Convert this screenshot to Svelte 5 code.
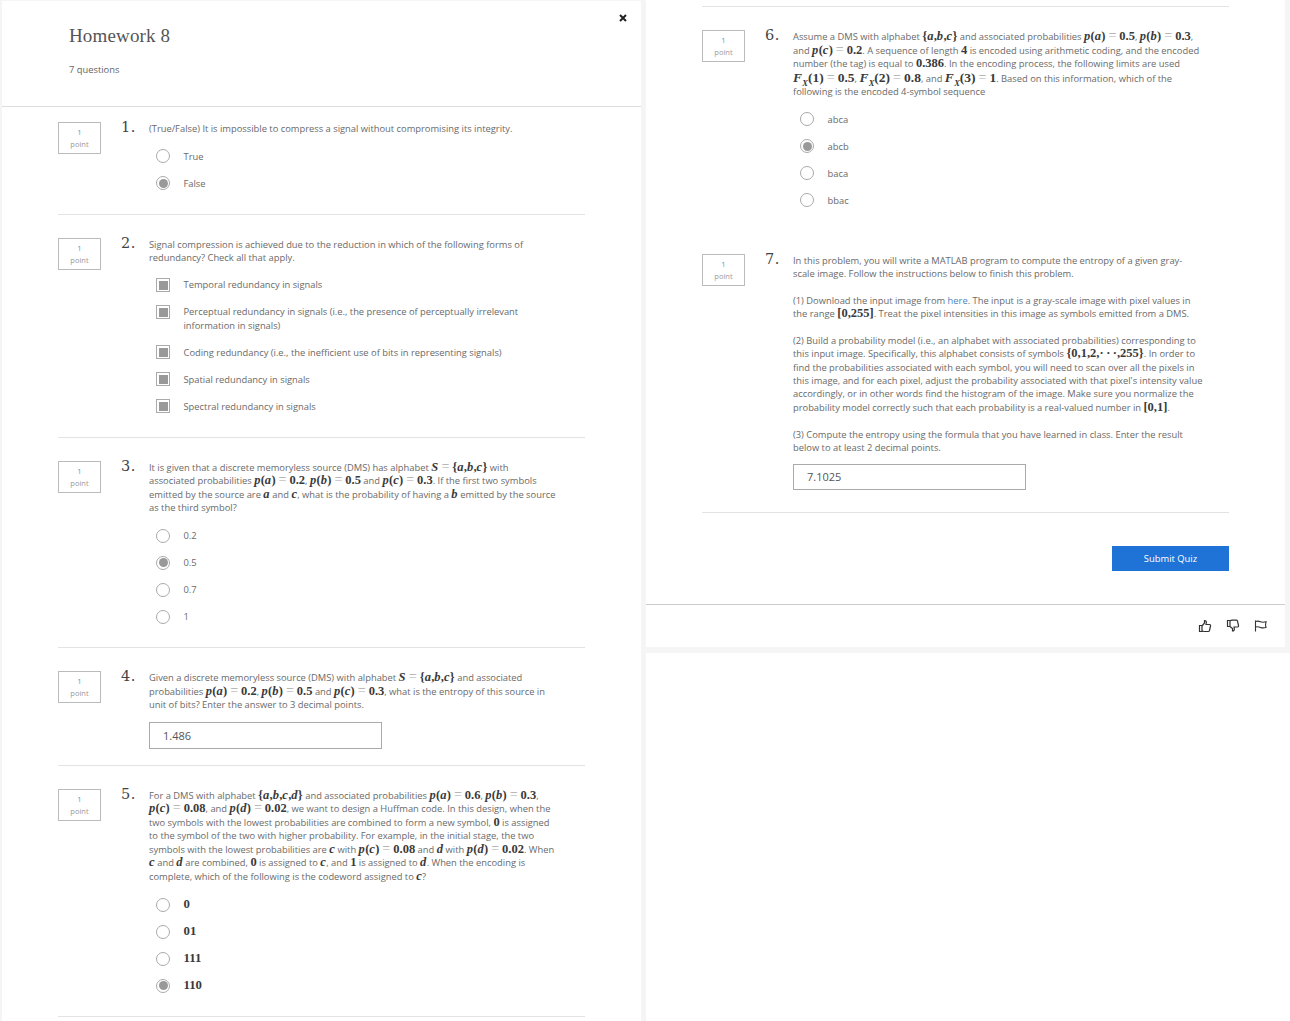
<script>
  const q3 = ['0.2', '0.5', '0.7', '1'];
  const q6 = ['abca', 'abcb', 'baca', 'bbac'];
  const q5 = ['0', '01', '111', '110'];
  const q2 = [
    'Temporal redundancy in signals',
    'Perceptual redundancy in signals (i.e., the presence of perceptually irrelevant<br>information in signals)',
    'Coding redundancy (i.e., the inefficient use of bits in representing signals)',
    'Spatial redundancy in signals',
    'Spectral redundancy in signals'
  ];
</script>

{#snippet eq(v, n)}<span class="m"><i>p</i>(<i>{v}</i>)<b>=</b>{n}</span>{/snippet}
{#snippet F(k, n)}<span class="m big"><i>F</i><sub>X</sub>({k})<b>=</b>{n}</span>{/snippet}
{#snippet v(s)}<span class="m"><i>{s}</i></span>{/snippet}
{#snippet n(s)}<span class="m">{s}</span>{/snippet}

{#snippet question(num, prompt, answers)}
  <div class="question">
    <div class="points"><span class="one">1</span><span>point</span></div>
    <div class="num">{num}.</div>
    <div class="body">
      <div class="prompt">{@render prompt()}</div>
      {@render answers()}
    </div>
  </div>
{/snippet}

{#snippet radios(items, selected, math)}
  <div class="options">
    {#each items as item, i}
      <div class="option">
        <span class="radio" class:on={i === selected}></span>
        <span class="label" class:mathlabel={math}>{item}</span>
      </div>
    {/each}
  </div>
{/snippet}

{#snippet p1()}(True/False) It is impossible to compress a signal without compromising its integrity.{/snippet}
{#snippet a1()}{@render radios(['True', 'False'], 1, false)}{/snippet}

{#snippet p2()}Signal compression is achieved due to the reduction in which of the following forms of<br>redundancy? Check all that apply.{/snippet}
{#snippet a2()}
  <div class="options">
    {#each q2 as item}
      <div class="option">
        <span class="check"></span>
        <span class="label">{@html item}</span>
      </div>
    {/each}
  </div>
{/snippet}

{#snippet p3()}It is given that a discrete memoryless source (DMS) has alphabet <span class="m"><i>S</i><b>=</b>&#123;<i>a</i>,<i>b</i>,<i>c</i>&#125;</span> with<br>associated probabilities {@render eq('a', '0.2')}, {@render eq('b', '0.5')} and {@render eq('c', '0.3')}. If the first two symbols<br>emitted by the source are {@render v('a')} and {@render v('c')}, what is the probability of having a {@render v('b')} emitted by the source<br>as the third symbol?{/snippet}
{#snippet a3()}{@render radios(q3, 1, false)}{/snippet}

{#snippet p4()}Given a discrete memoryless source (DMS) with alphabet <span class="m"><i>S</i><b>=</b>&#123;<i>a</i>,<i>b</i>,<i>c</i>&#125;</span> and associated<br>probabilities {@render eq('a', '0.2')}, {@render eq('b', '0.5')} and {@render eq('c', '0.3')}, what is the entropy of this source in<br>unit of bits? Enter the answer to 3 decimal points.{/snippet}
{#snippet a4()}<div class="input four">1.486</div>{/snippet}

{#snippet p5()}For a DMS with alphabet <span class="m">&#123;<i>a</i>,<i>b</i>,<i>c</i>,<i>d</i>&#125;</span> and associated probabilities {@render eq('a', '0.6')}, {@render eq('b', '0.3')},<br>{@render eq('c', '0.08')}, and {@render eq('d', '0.02')}, we want to design a Huffman code. In this design, when the<br>two symbols with the lowest probabilities are combined to form a new symbol, {@render n('0')} is assigned<br>to the symbol of the two with higher probability. For example, in the initial stage, the two<br>symbols with the lowest probabilities are {@render v('c')} with {@render eq('c', '0.08')} and {@render v('d')} with {@render eq('d', '0.02')}. When<br>{@render v('c')} and {@render v('d')} are combined, {@render n('0')} is assigned to {@render v('c')}, and {@render n('1')} is assigned to {@render v('d')}. When the encoding is<br>complete, which of the following is the codeword assigned to {@render v('c')}?{/snippet}
{#snippet a5()}{@render radios(q5, 3, true)}{/snippet}

{#snippet p6()}Assume a DMS with alphabet <span class="m">&#123;<i>a</i>,<i>b</i>,<i>c</i>&#125;</span> and associated probabilities {@render eq('a', '0.5')}, {@render eq('b', '0.3')},<br>and {@render eq('c', '0.2')}. A sequence of length {@render n('4')} is encoded using arithmetic coding, and the encoded<br>number (the tag) is equal to {@render n('0.386')}. In the encoding process, the following limits are used<br>{@render F('1', '0.5')}, {@render F('2', '0.8')}, and {@render F('3', '1')}. Based on this information, which of the<br>following is the encoded 4-symbol sequence{/snippet}
{#snippet a6()}{@render radios(q6, 1, false)}{/snippet}

{#snippet p7()}
  <p>In this problem, you will write a MATLAB program to compute the entropy of a given gray-<br>scale image. Follow the instructions below to finish this problem.</p>
  <p>(1) Download the input image from <span class="link">here</span>. The input is a gray-scale image with pixel values in<br>the range <span class="m">[0,255]</span>. Treat the pixel intensities in this image as symbols emitted from a DMS.</p>
  <p>(2) Build a probability model (i.e., an alphabet with associated probabilities) corresponding to<br>this input image. Specifically, this alphabet consists of symbols <span class="m">&#123;0,1,2,·&#8201;·&#8201;·,255&#125;</span>. In order to<br>find the probabilities associated with each symbol, you will need to scan over all the pixels in<br>this image, and for each pixel, adjust the probability associated with that pixel's intensity value<br>accordingly, or in other words find the histogram of the image. Make sure you normalize the<br>probability model correctly such that each probability is a real-valued number in <span class="m">[0,1]</span>.</p>
  <p>(3) Compute the entropy using the formula that you have learned in class. Enter the result<br>below to at least 2 decimal points.</p>
{/snippet}
{#snippet a7()}<div class="input seven">7.1025</div>{/snippet}

<div class="page">
  <section class="card left">
    <button class="close" aria-label="Close">
      <svg width="8" height="8" viewBox="0 0 8 8"><path d="M1 1l6 6M7 1L1 7" stroke="#222" stroke-width="2"/></svg>
    </button>
    <header>
      <h1>Homework 8</h1>
      <div class="count">7 questions</div>
    </header>
    <div class="list">
      {@render question(1, p1, a1)}
      <hr />
      {@render question(2, p2, a2)}
      <hr />
      {@render question(3, p3, a3)}
      <hr />
      {@render question(4, p4, a4)}
      <hr class="tight" />
      {@render question(5, p5, a5)}
      <hr />
    </div>
  </section>

  <div class="rightcol">
    <section class="card right">
      <div class="list">
        <hr class="top" />
        {@render question(6, p6, a6)}
        <div class="spacer"></div>
        {@render question(7, p7, a7)}
        <hr class="last" />
        <div class="submit"><button class="primary">Submit Quiz</button></div>
      </div>
      <footer>
        <svg width="14" height="14" viewBox="0 0 14 14" fill="none" stroke="#333" stroke-width="1.2"><path d="M1.5 6.5h2.500v6h-2.500zM4 7l2.500-3V1.500c1.500 0 2 1 1.800 2.200L8 5.500h3.500c1 0 1.200.8 1 1.500l-1 4.500c-.2.700-.6 1-1.300 1H6c-.8 0-1.300-.3-2-.7"/></svg>
        <svg width="14" height="14" viewBox="0 0 14 14" fill="none" stroke="#333" stroke-width="1.2"><path d="M1.500 1.500h2.500v6h-2.500zM4 1.800c.7-.4 1.200-.6 2-.6h4.200c.7 0 1.100.3 1.300 1l1 4.300c.2.700 0 1.500-1 1.500H8l.3 1.800c.2 1.200-.3 2.200-1.800 2.200v-2.500L4 7.500"/></svg>
        <svg width="14" height="14" viewBox="0 0 14 14" fill="none" stroke="#333" stroke-width="1.100"><path d="M1.500 1.500v11M1.500 2.500c2-.8 3.500-.3 5 .3s3 .6 5.500 0c-.6 1.800-.6 3.500 0 5.700-2.500.6-4 .5-5.500-.1s-3-1-5-.3"/></svg>
      </footer>
    </section>
    <div class="blank"></div>
  </div>
</div>

<style>
  :global(body) {
    margin: 0;
    background: #f5f5f5;
  }
  .page {
    display: flex;
    gap: 5px;
    padding-left: 2px;
    height: 1021px;
    overflow: hidden;
    font-family: "Open Sans", "Liberation Sans", sans-serif;
    font-size: 9.35px;
    line-height: 13.25px;
    color: #6a6a6a;
  }
  .card {
    background: #fff;
    box-sizing: border-box;
    width: 639px;
    flex: none;
  }
  .left {
    position: relative;
    margin-top: 1px;
    height: 1020px;
  }
  .close {
    position: absolute;
    left: 617px;
    top: 13px;
    padding: 0;
    border: 0;
    background: none;
    line-height: 0;
  }
  header {
    height: 106px;
    box-sizing: border-box;
    padding: 23px 0 0 67px;
    border-bottom: 1px solid #ddd;
    margin-bottom: 15px;
  }
  h1 {
    margin: 0;
    font-family: "Liberation Serif", serif;
    font-weight: 400;
    font-size: 19px;
    line-height: 24px;
    letter-spacing: 0.15px;
    color: #555;
  }
  .count {
    margin-top: 15px;
    color: #666;
  }
  .list {
    padding-left: 56px;
    width: 527px;
  }
  hr {
    border: 0;
    border-top: 1px solid #e3e3e3;
    margin: 23.9px 0 22.7px;
  }
  hr.tight {
    margin-top: 16px;
  }
  hr.top {
    margin: 0 0 23px;
  }
  hr.last {
    margin: 22px 0 33px;
  }
  .spacer {
    height: 46.5px;
  }
  .question {
    display: grid;
    grid-template-columns: 43px 20px 28px 1fr;
  }
  .points {
    box-sizing: border-box;
    width: 43px;
    height: 32px;
    border: 1px solid #bbb;
    display: flex;
    flex-direction: column;
    align-items: center;
    justify-content: center;
    font-size: 7.5px;
    line-height: 12px;
    color: #999;
  }
  .one {
    color: #5a94c8;
  }
  .num {
    grid-column: 3;
    margin-top: -2px;
    font-family: "DejaVu Serif", serif;
    font-size: 14.5px;
    line-height: 14px;
    letter-spacing: 0.5px;
    color: #444;
    white-space: nowrap;
  }
  .body {
    grid-column: 4;
    white-space: nowrap;
  }
  .prompt p {
    margin: 0 0 13.5px;
  }
  .prompt p:last-child {
    margin-bottom: 0;
  }
  .link {
    color: #4a86c0;
  }
  .m {
    font-family: "Liberation Serif", serif;
    font-size: 12.5px;
    font-weight: 700;
    color: #3a3a3a;
    line-height: 13.6px;
  }
  .m i {
    margin-right: 0.3px;
  }
  .m b {
    font-size: 14px;
    line-height: 0;
    font-weight: 400;
    color: #aaa;
    margin: 0 3px;
  }
  .m.big {
    font-size: 13.5px;
    line-height: 13.25px;
  }
  .m sub {
    font-size: 8.5px;
    font-style: italic;
    line-height: 0;
  }
  .options {
    display: flex;
    flex-direction: column;
    gap: 13.8px;
    margin-top: 14.4px;
    padding-left: 7px;
  }
  .option {
    display: flex;
    align-items: flex-start;
    gap: 13.5px;
  }
  .radio, .check {
    flex: none;
    box-sizing: border-box;
    width: 14px;
    height: 13.25px;
    padding: 0;
    position: relative;
    background: none;
  }
  .radio::before, .check::before {
    content: "";
    position: absolute;
    left: 0;
    top: -0.4px;
    width: 14px;
    height: 14px;
    box-sizing: border-box;
    border: 1px solid #aaa;
    background: #fff;
  }
  .radio::before {
    border-radius: 50%;
  }
  .radio.on::after {
    content: "";
    position: absolute;
    left: 2.5px;
    top: 2.1px;
    width: 9px;
    height: 9px;
    border-radius: 50%;
    background: #999;
  }
  .check::after {
    content: "";
    position: absolute;
    left: 2.5px;
    top: 2.1px;
    width: 9px;
    height: 9px;
    background: #999;
  }
  .mathlabel {
    font-family: "Liberation Serif", serif;
    font-size: 12.8px;
    font-weight: 700;
    color: #3a3a3a;
  }
  .input {
    box-sizing: border-box;
    width: 233px;
    height: 27px;
    margin-top: 10px;
    padding: 0 13px;
    border: 1px solid #aaa;
    font-size: 11px;
    line-height: 25px;
    color: #555;
  }
  .four {
    margin-top: 10.5px;
  }
  .seven {
    height: 26px;
    line-height: 24px;
  }
  .submit {
    display: flex;
    justify-content: flex-end;
  }
  .primary {
    width: 117px;
    height: 25px;
    padding: 0;
    border: 0;
    background: #1f73d6;
    color: #fff;
    font-family: "Open Sans", sans-serif;
    font-size: 9.4px;
    font-weight: 400;
  }
  .rightcol {
    width: 644px;
    flex: none;
  }
  .right {
    height: 647px;
    padding-top: 6px;
  }
  footer {
    box-sizing: border-box;
    margin-top: 33px;
    height: 43px;
    border-top: 1px solid #ccc;
    display: flex;
    justify-content: flex-end;
    align-items: center;
    gap: 14px;
    padding-right: 17px;
  }
  .blank {
    height: 368px;
    margin-top: 6px;
    background: #fff;
  }
</style>
